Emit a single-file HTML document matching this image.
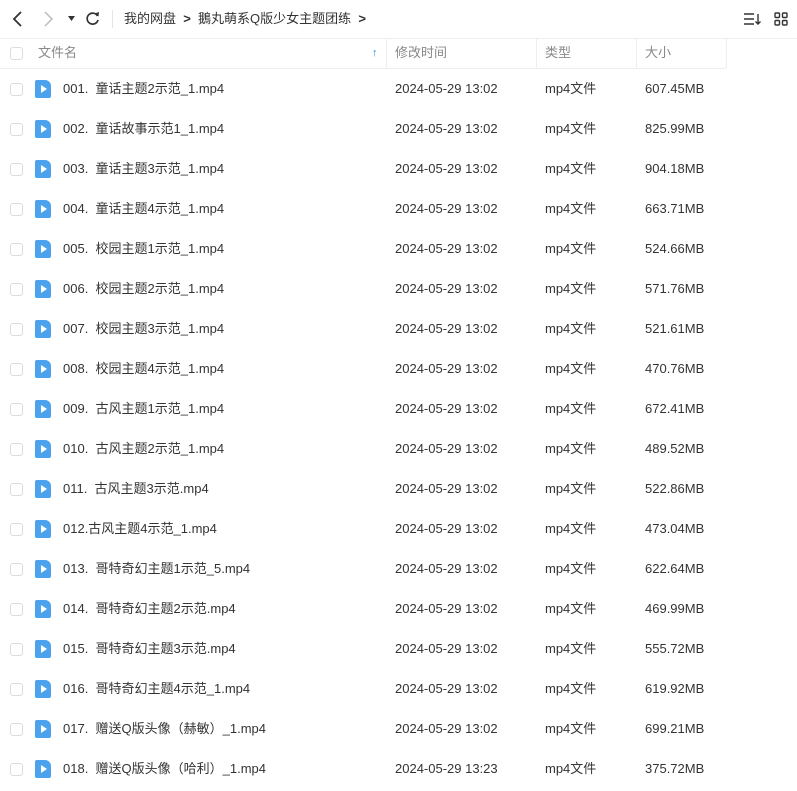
<!DOCTYPE html><html><head><meta charset="utf-8"><style>
body{margin:0;width:797px;height:791px;background:#fff;font-family:"Liberation Sans","Noto Sans CJK SC",sans-serif;color:#333;font-size:13px;position:relative;overflow:hidden}
.a{position:absolute;white-space:nowrap;line-height:16px}
.cb{position:absolute;left:10px;width:11px;height:11px;border:1px solid #ddd;border-radius:3px}
.ic{position:absolute;left:35px;width:16px;height:18px;background:#4aa3ec;border-radius:2px 6px 2px 2px}
.ic:after{content:"";position:absolute;left:6px;top:5px;border-left:6px solid #fff;border-top:4px solid transparent;border-bottom:4px solid transparent}
.h{color:#888}
.vl{position:absolute;top:38px;height:30px;width:1px;background:#eee}
</style></head><body>
<svg class="a" style="left:10px;top:10px" width="16" height="18"><path d="M11 2L4 9l7 7" stroke="#333" stroke-width="1.8" fill="none"/></svg>
<svg class="a" style="left:40px;top:10px" width="16" height="18"><path d="M5 2l7 7-7 7" stroke="#bbb" stroke-width="1.5" fill="none"/></svg>
<svg class="a" style="left:68px;top:16px" width="8" height="6"><path d="M0 0h7L3.5 5z" fill="#333"/></svg>
<svg class="a" style="left:85px;top:11px" width="16" height="16"><path d="M12.5 5A5.5 5.5 0 1 0 13 9" stroke="#333" stroke-width="1.7" fill="none"/><path d="M9.5 2.5L13.5 5.5 14 1z" fill="#333"/></svg>
<div class="a" style="left:112px;top:10px;width:1px;height:18px;background:#e5e5e5"></div>
<div class="a" style="left:124px;top:11px;font-size:13px">我的网盘 &nbsp;<b>&gt;</b>&nbsp; 鵝丸萌系Q版少女主题团练 &nbsp;<b>&gt;</b></div>
<svg class="a" style="left:744px;top:12px" width="18" height="14"><g stroke="#333" stroke-width="1.4" fill="none"><path d="M0 2h10M0 7h10M0 12h10M14 2v10M11.5 9.5l2.5 2.5 2.5-2.5"/></g></svg>
<svg class="a" style="left:774px;top:12px" width="14" height="14"><g fill="none" stroke="#333" stroke-width="1.4"><rect x="1" y="1" width="4.5" height="4.5" rx="1"/><rect x="8.5" y="1" width="4.5" height="4.5" rx="1"/><rect x="1" y="8.5" width="4.5" height="4.5" rx="1"/><rect x="8.5" y="8.5" width="4.5" height="4.5" rx="1"/></g></svg>
<div class="a" style="left:0;top:38px;width:797px;height:1px;background:#eee"></div>
<div class="a" style="left:0;top:68px;width:726px;height:1px;background:#eee"></div>
<div class="vl" style="left:386px"></div><div class="vl" style="left:536px"></div><div class="vl" style="left:636px"></div><div class="vl" style="left:726px"></div>
<div class="cb" style="top:47px"></div>
<div class="a h" style="left:38px;top:45px">文件名</div>
<div class="a" style="left:372px;top:45px;color:#2b8fe0;font-size:11px;font-weight:bold">↑</div>
<div class="a h" style="left:395px;top:45px">修改时间</div>
<div class="a h" style="left:545px;top:45px">类型</div>
<div class="a h" style="left:645px;top:45px">大小</div>
<div id="r"></div>
<script>
var d=[["001.  童话主题2示范_1.mp4","607.45MB"],["002.  童话故事示范1_1.mp4","825.99MB"],["003.  童话主题3示范_1.mp4","904.18MB"],["004.  童话主题4示范_1.mp4","663.71MB"],["005.  校园主题1示范_1.mp4","524.66MB"],["006.  校园主题2示范_1.mp4","571.76MB"],["007.  校园主题3示范_1.mp4","521.61MB"],["008.  校园主题4示范_1.mp4","470.76MB"],["009.  古风主题1示范_1.mp4","672.41MB"],["010.  古风主题2示范_1.mp4","489.52MB"],["011.  古风主题3示范.mp4","522.86MB"],["012.古风主题4示范_1.mp4","473.04MB"],["013.  哥特奇幻主题1示范_5.mp4","622.64MB"],["014.  哥特奇幻主题2示范.mp4","469.99MB"],["015.  哥特奇幻主题3示范.mp4","555.72MB"],["016.  哥特奇幻主题4示范_1.mp4","619.92MB"],["017.  赠送Q版头像（赫敏）_1.mp4","699.21MB"],["018.  赠送Q版头像（哈利）_1.mp4","375.72MB"]];
var h="";d.forEach(function(r,i){var y=89+i*40;h+='<div class="cb" style="top:'+(y-6)+'px"></div><div class="ic" style="top:'+(y-9)+'px"></div><div class="a" style="left:63px;top:'+(y-8)+'px">'+r[0].replace(/  /,"&nbsp; ")+'</div><div class="a" style="left:395px;top:'+(y-8)+'px">2024-05-29 13:'+(i==17?'23':'02')+'</div><div class="a" style="left:545px;top:'+(y-8)+'px">mp4文件</div><div class="a" style="left:645px;top:'+(y-8)+'px">'+r[1]+'</div>';});
document.getElementById("r").innerHTML=h;
</script>
</body></html>
